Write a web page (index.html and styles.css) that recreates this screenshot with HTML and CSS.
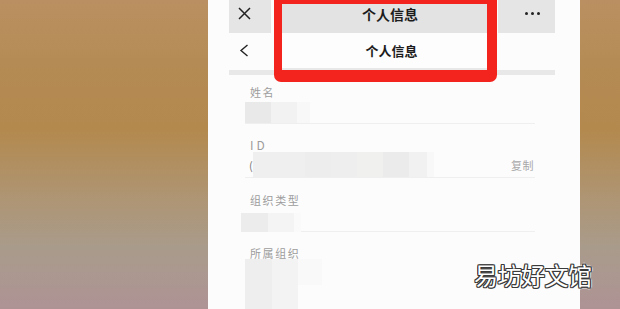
FILE: index.html
```html
<!DOCTYPE html>
<html lang="zh">
<head>
<meta charset="utf-8">
<link rel="stylesheet" href="styles.css">
</head>
<body>
<div class="stage">
  <div class="phone">
    <div class="nav">
      <div class="topbar">
        <div class="btn btn-close">
          <svg width="13" height="13" viewBox="0 0 13 13"><path d="M1 1 L12 12 M12 1 L1 12" stroke="#222" stroke-width="1.5" fill="none"/></svg>
        </div>
        <div class="btn btn-more"><span class="dot"></span><span class="dot"></span><span class="dot"></span></div>
      </div>
      <div class="titlerow">
        <svg class="back" width="10" height="13" viewBox="0 0 10 13"><path d="M8.5 1 L2 6.5 L8.5 12" stroke="#222" stroke-width="1.4" fill="none"/></svg>
      </div>
      <div class="strip"></div>
    </div>

    <div class="fields">
      <div class="field f-name">
        <div class="label">姓名</div>
        <div class="mosaic m-name">
          <span class="c1"></span><span class="c2"></span><span class="c3"></span>
        </div>
      </div>
      <div class="field f-id">
        <div class="label label-id">ID</div>
        <div class="idrow">
          <span class="frag">(</span>
          <div class="mosaic m-id">
            <span class="k1"></span><span class="k2"></span><span class="k3"></span><span class="k4"></span><span class="k5"></span><span class="k6"></span><span class="k7"></span><span class="k8"></span>
          </div>
          <span class="copy">复制</span>
        </div>
      </div>
      <div class="field f-type">
        <div class="label">组织类型</div>
        <div class="mosaic m-type">
          <span class="c1"></span><span class="c2"></span><span class="c3"></span>
        </div>
      </div>
      <div class="field f-org">
        <div class="label">所属组织</div>
        <div class="mosaic m-org">
          <span class="c1"></span><span class="c2"></span><span class="c3"></span>
        </div>
      </div>
    </div>

    <div class="popup">
      <div class="pop-head">个人信息</div>
      <div class="pop-body">个人信息</div>
    </div>
  </div>
  <div class="watermark">易坊好文馆</div>
</div>
</body>
</html>
```

FILE: styles.css
```css
* { box-sizing: border-box; }
html, body { margin: 0; padding: 0; }
body {
  width: 620px;
  height: 309px;
  overflow: hidden;
  font-family: "Noto Sans CJK SC", "Noto Sans", sans-serif;
  background: linear-gradient(to bottom, #ba9062 0%, #b58b55 20%, #b3894e 42%, #af9470 62%, #a99b8b 80%, #ae9395 100%);
}
.stage {
  position: relative;
  display: flex;
  height: 309px;
}
.phone {
  position: relative;
  margin-left: 208px;
  width: 372px;
  height: 309px;
  background: #fcfcfc;
}
.nav {
  margin: 0 25px 0 21px;
}
.topbar {
  display: flex;
  justify-content: space-between;
  height: 33px;
}
.btn { background: #e5e5e5; height: 33px; }
.btn-close {
  width: 42px;
  padding: 7px 0 0 9px;
}
.btn-close svg { display: block; }
.btn-more {
  width: 57px;
  display: flex;
  gap: 3px;
  padding: 12px 0 0 27px;
}
.dot {
  width: 3px;
  height: 3px;
  border-radius: 50%;
  background: #222;
}
.titlerow {
  height: 37px;
  padding: 11px 0 0 10px;
}
.back { display: block; }
.strip {
  height: 5px;
  background: #e8e8e8;
}

.fields { margin-left: 37px; width: 290px; }
.field {
  border-bottom: 1px solid #efefef;
}
.label {
  font-size: 11px;
  line-height: 14px;
  letter-spacing: 1.6px;
  color: #9c9c9c;
  padding-left: 5px;
}
.label-id { letter-spacing: 3px; font-size: 12px; }
.mosaic { display: flex; }
.mosaic span { display: block; height: 100%; }

.f-name .label { padding-top: 10px; }
.m-name { margin-top: 3px; height: 21px; }
.m-name .c1 { width: 26px; background: #e9e9e9; }
.m-name .c2 { width: 26px; background: #f2f2f2; }
.m-name .c3 { width: 13px; background: #f8f8f8; }

.f-id .label { padding-top: 14px; }
.idrow {
  display: flex;
  align-items: center;
  height: 25px;
}
.frag {
  width: 8px;
  font-size: 11px;
  line-height: 14px;
  color: #777;
  padding-left: 4px;
}
.m-id { height: 25px; }
.m-id span { width: 26px; }
.m-id .k1 { background: #efefef; }
.m-id .k2 { background: #efefef; }
.m-id .k3 { background: #ededed; }
.m-id .k4 { background: #eeeeee; }
.m-id .k5 { background: #f0f0ef; }
.m-id .k6 { background: #eaebea; }
.m-id .k7 { background: #f1f1f1; width: 18px; }
.m-id .k8 { background: #f8f8f8; width: 7px; }
.copy {
  margin-left: auto;
  margin-right: 1px;
  font-size: 11px;
  color: #a8a8a8;
  letter-spacing: 0.5px;
}

.f-type .label { padding-top: 15px; }
.m-type { margin-top: 6px; margin-left: -4px; height: 19px; margin-bottom: -1px; position: relative; }
.m-type .c1 { width: 27px; background: #ececec; }
.m-type .c2 { width: 26px; background: #f4f4f4; }
.m-type .c3 { width: 7px; background: #fafafa; }

.f-org { border-bottom: none; }
.f-org .label { padding-top: 14px; }
.m-org { margin-top: -1px; height: 50px; align-items: flex-start; }
.m-org .c1 { width: 27px; height: 50px; background: #eeeeee; }
.m-org .c2 { width: 26px; height: 50px; background: #f3f3f3; }
.m-org .c3 { width: 24px; height: 26px; background: #f9f9f9; }

.popup {
  position: absolute;
  left: 66px;
  top: -4px;
  width: 223px;
  border-style: solid;
  border-color: #f3231d;
  border-width: 8px 10px 12px 8px;
  border-radius: 0 0 7px 7px;
  background: #fdfdfd;
  text-align: center;
  font-weight: 700;
  color: #1c1c1c;
}
.pop-head {
  height: 29px;
  background: #e3e3e3;
  font-size: 14px;
  line-height: 20px;
  padding-left: 11px;
}
.pop-body {
  height: 37px;
  padding: 10px 0 0 14px;
  font-size: 13px;
  line-height: 15px;
  border-bottom: 2px solid #e8e8e8;
}

.watermark {
  position: absolute;
  left: 474px;
  top: 258px;
  font-size: 24px;
  line-height: 34px;
  letter-spacing: -0.5px;
  color: #ffffff;
  text-shadow:
    1px 0 0 #3a3a3a, -1px 0 0 #3a3a3a, 0 1px 0 #3a3a3a, 0 -1px 0 #3a3a3a,
    1px 1px 0 #3a3a3a, -1px -1px 0 #3a3a3a, 1px -1px 0 #3a3a3a, -1px 1px 0 #3a3a3a,
    2px 0 1px rgba(255,255,255,0.8), -2px 0 1px rgba(255,255,255,0.8), 0 2px 1px rgba(255,255,255,0.8), 0 -2px 1px rgba(255,255,255,0.8);
}
```
